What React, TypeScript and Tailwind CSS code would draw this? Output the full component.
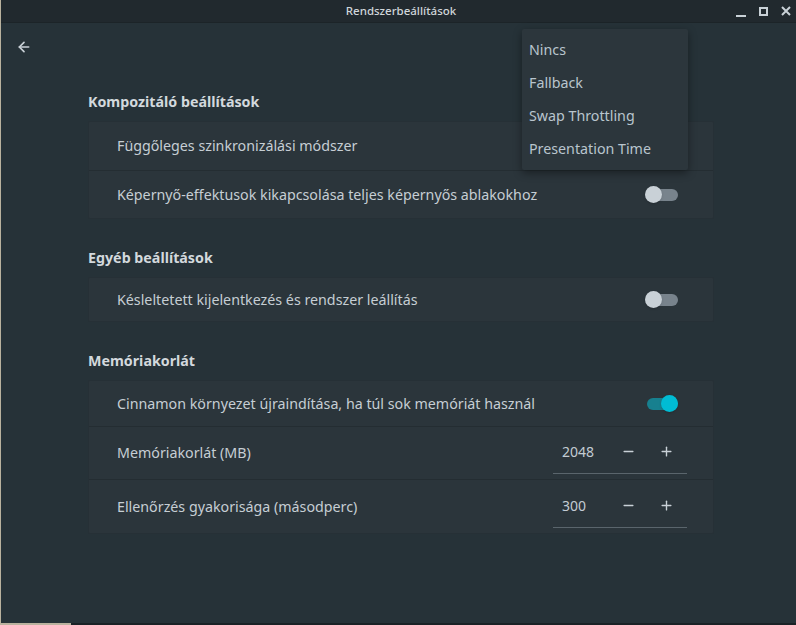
import { ArrowLeft, Minus, Plus } from 'lucide-react'

const font = { fontFamily: '"Noto Sans", "Open Sans", sans-serif' }

function Toggle({ on }: { on?: boolean }) {
  return (
    <div className="relative w-[33px] h-[17px] mr-[9px] flex items-center">
      <div className={`w-[31px] h-[12px] ml-[2px] rounded-full ${on ? 'bg-[#17808f]' : 'bg-[#78838c]'}`} />
      <div
        className={`absolute top-0 w-[17px] h-[17px] rounded-full shadow ${on ? 'left-[16px] bg-[#00bcd4]' : 'left-0 bg-[#c9d1d7]'}`}
      />
    </div>
  )
}

function Spin({ value }: { value: string }) {
  return (
    <div className="w-[134px] h-[44px] flex items-center border-b border-[#5a656c] mt-[-2px]">
      <span className="w-[56px] pl-[9px] text-[14px] text-[#c3ccd3]">{value}</span>
      <div className="flex-1 flex items-center justify-around pr-[2px] text-[#c9d1d7]">
        <Minus size={15} strokeWidth={2.2} />
        <Plus size={15} strokeWidth={2.2} />
      </div>
    </div>
  )
}

function Row({ label, h, children, last }: { label: string; h: string; children?: React.ReactNode; last?: boolean }) {
  return (
    <div className={`flex items-center justify-between pl-[28px] pr-[26px] ${h} ${last ? '' : 'border-b border-[#242d32]'}`}>
      <span className="text-[14.25px] text-[#c6ced4]">{label}</span>
      {children}
    </div>
  )
}

function Section({ title, first, children }: { title: string; first?: boolean; children: React.ReactNode }) {
  return (
    <section className={first ? 'mt-0' : 'mt-[28px]'}>
      <h2 className="h-[22px] mb-[8px] flex items-center text-[14.25px] font-bold text-[#d3d9dd]">{title}</h2>
      <div className="bg-[#2b353b] border border-[#263036] rounded-[2px]">{children}</div>
    </section>
  )
}

export default function App() {
  return (
    <div className="w-[796px] h-[625px] flex flex-col bg-[#263238] border-l border-[#b9b29e] overflow-hidden" style={font}>
      {/* titlebar */}
      <header className="relative h-[23px] shrink-0 bg-[#21292e] border-b border-[#1c2428] flex items-center justify-center">
        <span className="text-[11.5px] font-medium text-[#d0d6da] pl-[5px]">Rendszerbeállítások</span>
        <div className="absolute right-[5px] top-0 h-full flex items-center gap-[13px] text-[#c9d1d7]">
          <div className="w-[10px] h-[2px] bg-[#c9d1d7] mt-[10px]" />
          <div className="w-[9px] h-[9px] border-2 border-[#c9d1d7]" />
          <svg width="10" height="10" viewBox="0 0 10 10" stroke="#c9d1d7" strokeWidth="2">
            <path d="M1 1 L9 9 M9 1 L1 9" />
          </svg>
        </div>
      </header>

      <div className="relative flex-1 flex flex-col">
        <div className="h-[45px] flex items-center pl-[15px] pt-[2px] text-[#c9d1d7]">
          <ArrowLeft size={16} strokeWidth={2.5} />
        </div>

        <main className="ml-[87px] w-[626px] mt-[23px]">
          <Section title="Kompozitáló beállítások" first>
            <Row label="Függőleges szinkronizálási módszer" h="h-[49px]" />
            <Row label="Képernyő-effektusok kikapcsolása teljes képernyős ablakokhoz" h="h-[47px]" last>
              <Toggle />
            </Row>
          </Section>

          <Section title="Egyéb beállítások">
            <Row label="Késleltetett kijelentkezés és rendszer leállítás" h="h-[43px]" last>
              <Toggle />
            </Row>
          </Section>

          <Section title="Memóriakorlát">
            <Row label="Cinnamon környezet újraindítása, ha túl sok memóriát használ" h="h-[46px]">
              <Toggle on />
            </Row>
            <Row label="Memóriakorlát (MB)" h="h-[53px]">
              <Spin value="2048" />
            </Row>
            <Row label="Ellenőrzés gyakorisága (másodperc)" h="h-[53px]" last>
              <Spin value="300" />
            </Row>
          </Section>
        </main>

        {/* combo dropdown */}
        <div className="absolute left-[521px] top-[6px] w-[166px] h-[141px] bg-[#2c363c] rounded-[2px] shadow-[0_3px_8px_rgba(0,0,0,0.4)] py-[4px]">
          {['Nincs', 'Fallback', 'Swap Throttling', 'Presentation Time'].map((t) => (
            <div key={t} className="h-[33px] flex items-center pl-[7px] text-[14.25px] text-[#b9c5ce]">
              {t}
            </div>
          ))}
        </div>
      </div>

      <div className="h-[2px] shrink-0 flex">
        <div className="w-[70px] bg-[#b9b29e]" />
        <div className="flex-1 bg-[#1a2226]" />
      </div>
    </div>
  )
}
